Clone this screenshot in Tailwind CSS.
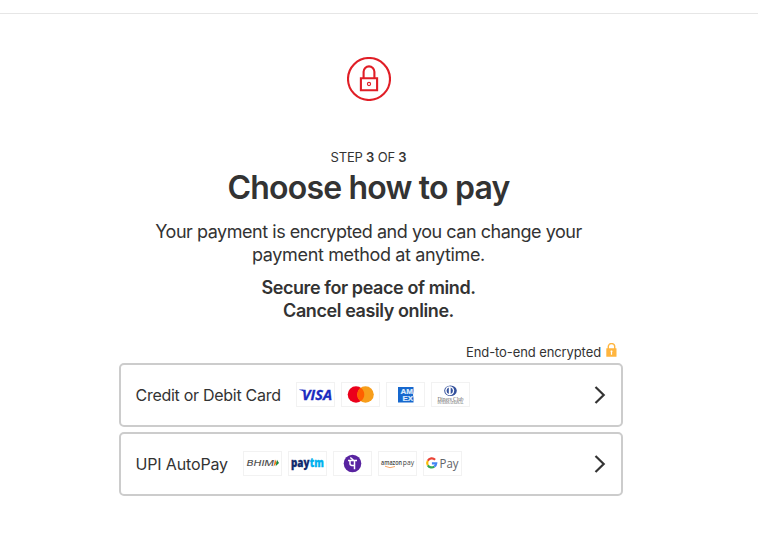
<!DOCTYPE html>
<html lang="en">
<head>
<meta charset="utf-8">
<title>Choose how to pay</title>
<script src="https://cdn.jsdelivr.net/npm/@tailwindcss/browser@4"></script>
</head>
<body class="h-[560px] overflow-hidden bg-white font-['Inter','Liberation_Sans',sans-serif] text-[#333]">
<header class="h-[14px] border-b border-[#e6e6e6]"></header>
<main class="ml-[119px] flex w-[504px] flex-col pt-[43px]">
  <section class="flex w-[499px] flex-col items-center text-center">
    <svg class="size-[44px]" viewBox="0 0 44 44" fill="none" stroke="#e01e26">
      <circle cx="22" cy="22" r="21" stroke-width="2.1"/>
      <path d="M13.9 21.2h16.2v12H13.9zM16.6 21v-6.2a5.4 5.4 0 0 1 10.8 0V21" stroke-width="2.1"/>
      <circle cx="22" cy="27" r="1.600" stroke-width="1.100"/>
    </svg>
    <p class="mt-[48px] h-[17px] whitespace-nowrap text-[13px] leading-[17px] tracking-[-0.2px]">STEP <b class="font-semibold">3</b> OF <b class="font-semibold">3</b></p>
    <h1 class="mt-[2px] h-[40px] whitespace-nowrap text-[32px] font-semibold leading-[40px] tracking-[-0.8px]">Choose how to pay</h1>
    <p class="mt-[12px] whitespace-nowrap text-[18px] leading-[23px]"><span class="tracking-[-0.47px]">Your payment is encrypted and you can change your</span><br><span class="tracking-[-0.36px]">payment method at anytime.</span></p>
    <p class="mt-[10px] whitespace-nowrap text-[18px] font-semibold leading-[23px] tracking-[-0.41px]">Secure for peace of mind.<br>Cancel easily online.</p>
  </section>
  <div class="mt-[20px] flex h-[21px] items-start justify-end pr-[6px]">
    <span class="mt-[2px] whitespace-nowrap text-[13px] leading-[17px] tracking-[-0.1px]">End-to-end encrypted</span>
    <svg class="ml-[5px] mt-[1px] h-[14px] w-[11px]" viewBox="0 0 11 14">
      <path d="M2.3 6V3.6a3.2 3 0 0 1 6.4 0V6" fill="none" stroke="#ffb53f" stroke-width="1.4"/>
      <rect x=".3" y="5.2" width="10.2" height="8.6" rx=".4" fill="#ffb53f"/>
      <path d="M5.5 7.500v4.200M4.600 8.300h1.800" stroke="#fff" stroke-width="1.2"/>
    </svg>
  </div>
  <div class="flex flex-col gap-[5px]">
    <button class="flex h-[64px] items-center rounded-[5px] border-2 border-[#ccc] pl-[14.5px] pr-[15px]">
      <span class="w-[160.5px] whitespace-nowrap text-left text-[16px] leading-[20px] tracking-[-0.28px]">Credit or Debit Card</span>
      <span class="flex gap-[6px] pb-[2px]">
        <svg class="h-[25px] w-[39px]" viewBox="0 0 39 25"><rect x=".5" y=".5" width="38" height="24" fill="#fff" stroke="#f2f2f2"/>
          <text x="6" y="17.800" font-family="Open Sans, sans-serif" font-size="14.500" font-weight="700" font-style="italic" fill="#1a2bc0" stroke="#1a2bc0" stroke-width=".3" textLength="30" lengthAdjust="spacingAndGlyphs">VISA</text>
          <path d="M3.3 7.500h4l1.500 3C7 8.900 5.200 8.100 3.300 7.900z" fill="#1a2bc0"/></svg>
        <svg class="h-[25px] w-[39px]" viewBox="0 0 39 25"><rect x=".5" y=".5" width="38" height="24" fill="#fff" stroke="#f2f2f2"/>
          <circle cx="15" cy="12.500" r="8.300" fill="#eb001b"/><circle cx="24.500" cy="12.500" r="8.300" fill="#f79e1b"/>
          <path d="M19.750 5.700a8.300 8.300 0 0 1 0 13.600a8.300 8.300 0 0 1 0-13.600z" fill="#ff5f00"/></svg>
        <svg class="h-[25px] w-[39px]" viewBox="0 0 39 25"><rect x=".5" y=".5" width="38" height="24" fill="#fff" stroke="#f2f2f2"/>
          <path d="M12 5h15.500v4L27 13l.5 3v4.500H12z" fill="#1768ce"/>
          <g font-family="Liberation Sans, sans-serif" font-weight="bold" font-size="7" fill="#dceafc" stroke="#dceafc" stroke-width=".2"><text x="14.500" y="12.300" textLength="12.500" lengthAdjust="spacingAndGlyphs">AM</text><text x="16.500" y="18.800" textLength="10.500" lengthAdjust="spacingAndGlyphs">EX</text></g></svg>
        <svg class="h-[25px] w-[39px]" viewBox="0 0 39 25"><rect x=".5" y=".5" width="38" height="24" fill="#fff" stroke="#f2f2f2"/>
          <ellipse cx="19.500" cy="8.700" rx="6.300" ry="5.300" fill="#34519c"/><circle cx="18.700" cy="8.700" r="4.500" fill="#fff"/>
          <path d="M17.800 5.500a3.400 3.400 0 0 0 0 6.400zM19.700 5.500a3.400 3.400 0 0 1 0 6.400z" fill="#34519c"/>
          <text x="6.500" y="18.500" font-family="Liberation Serif, serif" font-size="6.500" fill="#666" textLength="26" lengthAdjust="spacingAndGlyphs">Diners Club</text>
          <text x="6.500" y="22.300" font-family="Liberation Serif, serif" font-size="3" fill="#555" textLength="26" lengthAdjust="spacingAndGlyphs">INTERNATIONAL</text></svg>
      </span>
      <svg class="ml-auto h-[20px] w-[12px]" viewBox="0 0 12 20" fill="none" stroke="#333" stroke-width="2.200"><path d="M1.500 2l8.200 8-8.200 8"/></svg>
    </button>
    <button class="flex h-[64px] items-center rounded-[5px] border-2 border-[#ccc] pl-[14.5px] pr-[15px]">
      <span class="w-[107.5px] whitespace-nowrap text-left text-[16px] leading-[20px] tracking-[-0.15px]">UPI AutoPay</span>
      <span class="flex gap-[6px] pb-[2px]">
        <svg class="h-[25px] w-[39px]" viewBox="0 0 39 25"><rect x=".5" y=".5" width="38" height="24" fill="#fff" stroke="#f2f2f2"/>
          <text x="3.500" y="15" font-family="Inter, sans-serif" font-size="8" font-weight="500" font-style="italic" fill="#555" textLength="27.500" lengthAdjust="spacingAndGlyphs">BHIM</text>
          <path d="M32 8.500l2 3.500-3.500 3.500z" fill="#f47b20"/><path d="M34 8.800l2 3.200-3.400 3.200z" fill="#138a43"/></svg>
        <svg class="h-[25px] w-[39px]" viewBox="0 0 39 25"><rect x=".5" y=".5" width="38" height="24" fill="#fff" stroke="#f2f2f2"/>
          <g font-family="Open Sans, sans-serif" font-size="12" font-weight="800" stroke-width=".3"><text x="3" y="16.300" fill="#10296b" stroke="#10296b" textLength="18.500" lengthAdjust="spacingAndGlyphs">pay</text><text x="21.800" y="16.300" fill="#00b1ee" stroke="#00b1ee" textLength="14" lengthAdjust="spacingAndGlyphs">tm</text></g></svg>
        <svg class="h-[25px] w-[39px]" viewBox="0 0 39 25"><rect x=".5" y=".5" width="38" height="24" fill="#fff" stroke="#f2f2f2"/>
          <circle cx="19.500" cy="12.500" r="8.800" fill="#5823a0"/>
          <path d="M15 9.500h9M17.300 6.500l3 2.500M17 9.500v3.600q0 1.700 4.500 1.300M21.500 9.500v8.800" fill="none" stroke="#fff" stroke-width="1.500"/></svg>
        <svg class="h-[25px] w-[39px]" viewBox="0 0 39 25"><rect x=".5" y=".5" width="38" height="24" fill="#fff" stroke="#f2f2f2"/>
          <g font-family="Open Sans, sans-serif" font-size="6.800" fill="#444"><text x="3" y="14" font-weight="600" textLength="21" lengthAdjust="spacingAndGlyphs">amazon</text><text x="24.800" y="14" textLength="11.200" lengthAdjust="spacingAndGlyphs">pay</text></g>
          <path d="M7 15.200q5 2.800 10 .3" fill="none" stroke="#f8a768" stroke-width="1"/></svg>
        <svg class="h-[25px] w-[39px]" viewBox="0 0 39 25"><rect x=".5" y=".5" width="38" height="24" fill="#fff" stroke="#f2f2f2"/>
          <g fill="none" stroke-width="2.200"><path d="M12.100 8.700A4.600 4.600 0 0 0 4.800 9.700" stroke="#ea4335"/><path d="M4.800 9.700a4.600 4.600 0 0 0 0 4.600" stroke="#fbbc04"/><path d="M4.800 14.300a4.600 4.600 0 0 0 6.500 1.300" stroke="#34a853"/><path d="M11.300 15.600a4.600 4.600 0 0 0 1.900-3.300H8.900" stroke="#4285f4"/></g>
          <text x="16.500" y="16.800" font-family="Open Sans, sans-serif" font-size="13" fill="#5f6368" textLength="19" lengthAdjust="spacingAndGlyphs">Pay</text></svg>
      </span>
      <svg class="ml-auto h-[20px] w-[12px]" viewBox="0 0 12 20" fill="none" stroke="#333" stroke-width="2.200"><path d="M1.500 2l8.200 8-8.200 8"/></svg>
    </button>
  </div>
</main>
</body>
</html>
